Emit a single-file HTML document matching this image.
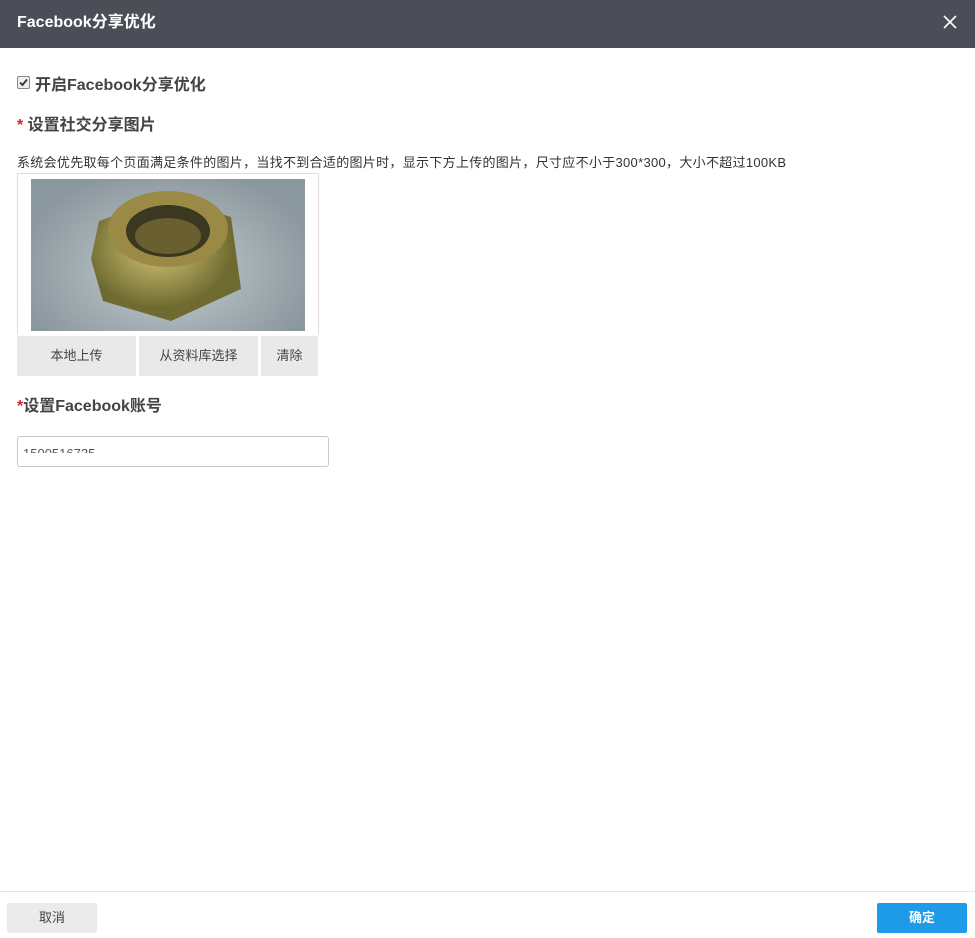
<!DOCTYPE html>
<html><head><meta charset="utf-8"><style>
body{margin:0;width:975px;height:938px;background:#fff;font-family:"Liberation Sans","Noto Sans CJK SC",sans-serif;position:relative;overflow:hidden;color:#333}
.hd{position:absolute;left:0;top:0;width:975px;height:48px;background:#4b4e56;color:#fff;font-weight:bold;font-size:16px;line-height:46px;padding-left:17px;box-sizing:border-box}
.x{position:absolute;right:18px;top:15px;width:14px;height:14px}
.t{position:absolute;font-weight:bold;font-size:16px;color:#444}
.r{color:#e02020}
.img{position:absolute;left:17px;top:173px;width:300px;height:161px;border:1px solid #ddd;border-bottom:none}
.pic{position:absolute;left:13px;top:5px;width:274px;height:152px;background:radial-gradient(ellipse at 50% 60%,#c4ccd0,#8a979d 80%);overflow:hidden}
.btn{position:absolute;top:336px;height:40px;background:#e9e9e9;font-size:13px;line-height:40px;text-align:center;color:#444}
.inp{position:absolute;left:17px;top:436px;width:310px;height:29px;border:1px solid #c8c8c8;border-radius:3px}
.ft{position:absolute;left:0;top:891px;width:975px;border-top:1px solid #e5e5e5}
</style></head><body>
<div class="hd">Facebook分享优化<svg class="x" viewBox="0 0 14 14"><path d="M1 1L13 13M13 1L1 13" stroke="#fff" stroke-width="1.6"/></svg></div>
<div style="position:absolute;left:17px;top:76px;width:11px;height:11px;border:1px solid #888;border-radius:2px;background:#eee"><svg viewBox="0 0 11 11" width="11" height="11" style="display:block"><path d="M2 5.5L4.5 8L9 2.5" stroke="#333" stroke-width="1.8" fill="none"/></svg></div>
<div class="t" style="left:35px;top:71px">开启Facebook分享优化</div>
<div class="t" style="left:17px;top:111px"><span class="r">*</span> 设置社交分享图片</div>
<div style="position:absolute;left:17px;top:152px;font-size:13px;color:#333;letter-spacing:0.3px;white-space:nowrap">系统会优先取每个页面满足条件的图片，当找不到合适的图片时，显示下方上传的图片，尺寸应不小于300*300，大小不超过100KB</div>
<div class="img"><div class="pic">
<svg width="274" height="152" viewBox="0 0 274 152"><defs><radialGradient id="g" cx="45%" cy="40%"><stop offset="0" stop-color="#d8c878"/><stop offset="1" stop-color="#6e6a30"/></radialGradient></defs>
<polygon points="68,42 135,18 200,38 210,110 140,142 72,122 60,80" fill="url(#g)"/>
<ellipse cx="137" cy="50" rx="60" ry="38" fill="#9a8a45"/>
<ellipse cx="137" cy="52" rx="42" ry="26" fill="#3a3820"/>
<ellipse cx="137" cy="57" rx="33" ry="18" fill="#6a5f30"/></svg></div></div>
<div class="btn" style="left:17px;width:119px">本地上传</div>
<div class="btn" style="left:139px;width:119px">从资料库选择</div>
<div class="btn" style="left:261px;width:57px">清除</div>
<div class="t" style="left:17px;top:392px"><span class="r">*</span>设置Facebook账号</div>
<div class="inp"><div style="position:absolute;left:5px;top:8px;height:8px;overflow:hidden;font-size:13px;line-height:17px;color:#555">1500516735</div></div>
<div class="ft"></div>
<div style="position:absolute;left:7px;top:903px;width:90px;height:30px;background:#ebebeb;border-radius:2px;font-size:13px;line-height:30px;text-align:center;color:#444">取消</div>
<div style="position:absolute;left:877px;top:903px;width:90px;height:30px;background:#1e9be8;border-radius:2px;font-size:13px;line-height:30px;text-align:center;color:#fff;font-weight:bold">确定</div>
</body></html>
